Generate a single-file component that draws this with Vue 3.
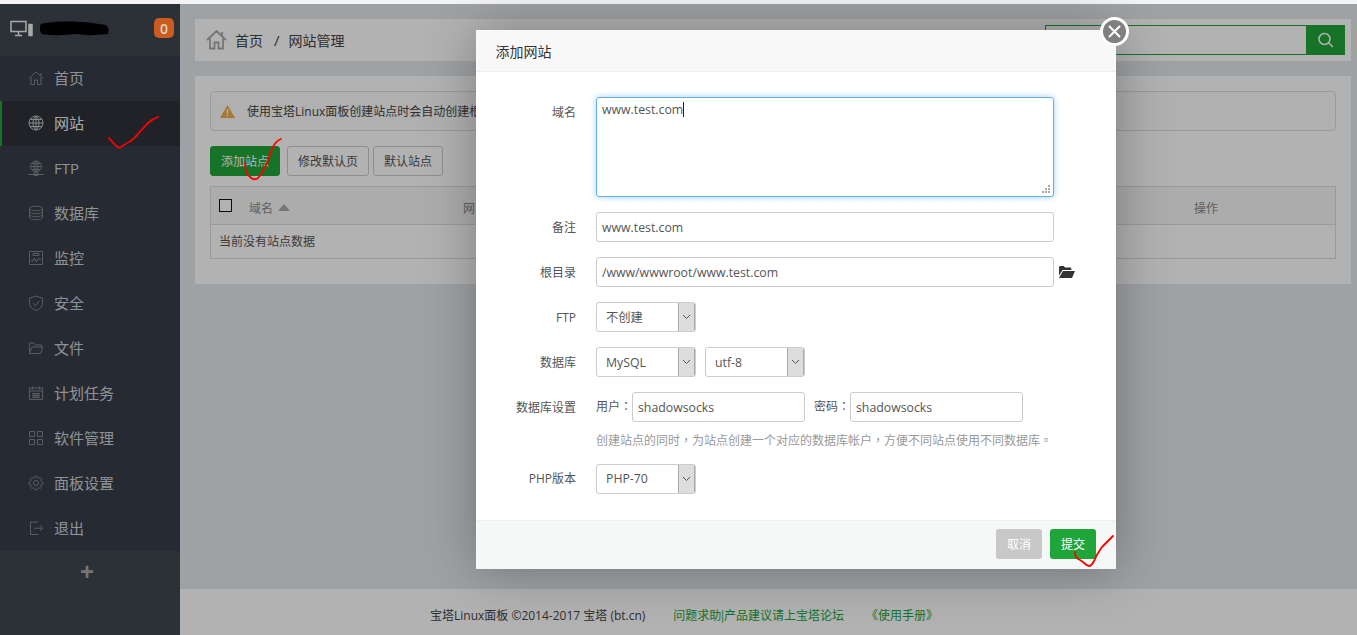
<script setup>
function gearPath() {
  let d = ''
  const n = 8
  for (let i = 0; i < n; i++) {
    const a = (i / n) * Math.PI * 2
    const w = Math.PI / n / 2
    const pts = [[5.4, a - w * 1.5], [7, a - w * 0.7], [7, a + w * 0.7], [5.4, a + w * 1.5]]
    for (const [r, t] of pts) {
      d += (d ? 'L' : 'M') + (8 + r * Math.cos(t)).toFixed(2) + ' ' + (8 + r * Math.sin(t)).toFixed(2)
    }
  }
  return d + 'Z M5.5 8a2.5 2.5 0 1 0 5 0a2.5 2.5 0 1 0-5 0Z'
}
const menu = [
  { name: '首页', d: 'M1 8.5L8 2l7 6.5M13 3v3M3 7.5v7h3.5V10h3v4.5H13v-7' },
  { name: '网站', active: true, d: 'M1 8a7 7 0 1 0 14 0a7 7 0 1 0-14 0ZM8 1v14M1 8h14M2 4.5h12M2 11.5h12M8 1c-4 3-4 11 0 14M8 1c4 3 4 11 0 14' },
  { name: 'FTP', d: 'M2.500 6.500a5.500 5.500 0 1 0 11 0a5.500 5.500 0 1 0-11 0ZM8 1v11M2.500 6.500h11M3.500 3.500h9M3.500 9.500h9M8 1c-3 3-3 8 0 11M8 1c3 3 3 8 0 11M0 14.500h16M6 13h4v2.500H6Z' },
  { name: '数据库', d: 'M1.500 3.500c0-3 13-3 13 0c0 3-13 3-13 0ZM1.500 3.500v9c0 3 13 3 13 0v-9M1.500 6.500c0 3 13 3 13 0M1.500 9.500c0 3 13 3 13 0' },
  { name: '监控', d: 'M1.500 1.500h13v13h-13ZM3 11h2l1.500-3 2 4 1.500-3h3M5 3.500h6v2H5Z' },
  { name: '安全', d: 'M8 1l6.500 2.200v5c0 3.800-3 5.800-6.500 7.300C4.500 14 1.500 12 1.500 8.200v-5ZM5 8l2.500 2.500L11.500 6' },
  { name: '文件', d: 'M1.500 13.500V3h4.500l1.500 2h6v2M1.500 13.500h11L15 7H4Z' },
  { name: '计划任务', d: 'M1.500 3h13v11.500h-13ZM4.500 1.500v3M11.500 1.500v3M1.500 6h13M4 8.500h8M4 10.500h8M4 12.500h8M6 8v5M8 8v5M10 8v5' },
  { name: '软件管理', d: 'M1.500 1.500h5v5h-5ZM9.500 1.500h5v5h-5ZM1.500 9.500h5v5h-5ZM9.500 9.500h5v5h-5Z' },
  { name: '面板设置', d: gearPath() },
  { name: '退出', d: 'M10 2H2.500v12.500H10M6 8.200h8.500M12 5.500l2.800 2.700-2.800 2.700' }
]
</script>

<template>
  <div class="page">
    <div class="strip"></div>
    <div class="shell">
      <aside class="side">
        <div class="side-head">
          <svg class="mon" width="23" height="17" viewBox="0 0 23 17" fill="none" stroke="currentColor" stroke-width="1.500">
            <path d="M1 1.500h15v10H1ZM5 15.500h7M8.500 12v3" />
            <path d="M19 4.500h3v11h-3Z" fill="currentColor" />
          </svg>
          <svg class="blob" width="70" height="15" viewBox="0 0 70 15">
            <path d="M1 3C10 1 24 0 40 1c8 0 12 1 26 3c3 2 3 7 2 9c-15 1-20 2-30 0c-12 1-24 2-36 0C-1 10-1 6 1 3Z" fill="#000" />
          </svg>
          <span class="badge">0</span>
        </div>
        <nav class="menu">
          <div v-for="m in menu" :key="m.name" class="item" :class="{ on: m.active }">
            <svg width="16" height="16" viewBox="0 0 16 16" fill="none" stroke="currentColor" stroke-width="1">
              <path :d="m.d" />
            </svg>
            <span>{{ m.name }}</span>
          </div>
        </nav>
        <div class="plus">+</div>
      </aside>
      <main class="main">
        <div class="crumbs">
          <svg class="home" width="21" height="21" viewBox="0 0 21 21" fill="none" stroke="#a8a8a8" stroke-width="1.800">
            <path d="M1 11L10.500 2L20 11M16 3v4M4 9.500V19.500h4.500v-6h4v6H17V9.500" />
          </svg>
          <span>首页</span>
          <span class="sep">/</span>
          <span>网站管理</span>
          <div class="search">
            <div class="search-btn">
              <svg width="18" height="18" viewBox="0 0 18 18" fill="none" stroke="#fff" stroke-width="1.500">
                <path d="M2 8a5.500 5.500 0 1 0 11 0a5.500 5.500 0 1 0-11 0ZM11.800 12l4 4" />
              </svg>
            </div>
          </div>
        </div>
        <section class="card">
          <div class="alert">
            <svg width="15" height="13" viewBox="0 0 15 13">
              <path d="M7.500 0L15 13H0Z" fill="#f0ad4e" />
              <path d="M6.800 4h1.400v5H6.800ZM6.800 10h1.400v1.500H6.800Z" fill="#fff" />
            </svg>
            <span>使用宝塔Linux面板创建站点时会自动创建根</span>
          </div>
          <div class="btns">
            <button class="btn green">添加站点</button>
            <button class="btn w82">修改默认页</button>
            <button class="btn plain">默认站点</button>
          </div>
          <div class="table">
            <div class="thead">
              <span class="check"></span>
              <span class="th-name">域名<i class="tri"></i></span>
              <span class="th-net">网</span>
              <span class="th-op">操作</span>
            </div>
            <div class="tbody">当前没有站点数据</div>
          </div>
        </section>
        <footer class="foot">
          <span>宝塔Linux面板 ©2014-2017 宝塔 (bt.cn)</span>
          <a class="l1">问题求助<span class="bar">|</span>产品建议请上宝塔论坛</a>
          <a class="l2">《使用手册》</a>
        </footer>
      </main>
    </div>

    <div class="mask"></div>

    <div class="modal">
      <div class="m-title">添加网站</div>
      <div class="m-body">
        <div class="row">
          <label>域名</label>
          <div class="area">www.test.com<i class="caret"></i>
            <svg class="grip" width="9" height="9" viewBox="0 0 9 9" fill="#a8a8a8">
              <path d="M6 0h2v2H6ZM3 3h2v2H3ZM6 3h2v2H6ZM0 6h2v2H0ZM3 6h2v2H3ZM6 6h2v2H6Z" />
            </svg>
          </div>
        </div>
        <div class="row">
          <label>备注</label>
          <div class="inp wide">www.test.com</div>
        </div>
        <div class="row">
          <label>根目录</label>
          <div class="inp wide">/www/wwwroot/www.test.com</div>
          <svg class="open" width="16" height="12" viewBox="0 0 16 12" fill="#333">
            <path d="M0 1.500C0 .7.600 0 1.400 0h3.400l1.200 1.500h5c.8 0 1.400.6 1.400 1.400V4H3.500L0 9.500ZM3.900 5H16l-3 7H0Z" />
          </svg>
        </div>
        <div class="row">
          <label>FTP</label>
          <div class="sel"><span>不创建</span><i class="arrow"><svg width="9" height="6" viewBox="0 0 9 6" fill="none" stroke="#555"><path d="M1 1l3.500 3.500L8 1" /></svg></i></div>
        </div>
        <div class="row">
          <label>数据库</label>
          <div class="sel"><span>MySQL</span><i class="arrow"><svg width="9" height="6" viewBox="0 0 9 6" fill="none" stroke="#555"><path d="M1 1l3.500 3.500L8 1" /></svg></i></div>
          <div class="sel second"><span>utf-8</span><i class="arrow"><svg width="9" height="6" viewBox="0 0 9 6" fill="none" stroke="#555"><path d="M1 1l3.500 3.500L8 1" /></svg></i></div>
        </div>
        <div class="row db">
          <label>数据库设置</label>
          <span class="pre">用户：</span>
          <div class="inp short">shadowsocks</div>
          <span class="pre pw">密码：</span>
          <div class="inp short">shadowsocks</div>
        </div>
        <div class="hint">创建站点的同时，为站点创建一个对应的数据库帐户，方便不同站点使用不同数据库。</div>
        <div class="row php">
          <label>PHP版本</label>
          <div class="sel"><span>PHP-70</span><i class="arrow"><svg width="9" height="6" viewBox="0 0 9 6" fill="none" stroke="#555"><path d="M1 1l3.500 3.500L8 1" /></svg></i></div>
        </div>
      </div>
      <div class="m-foot">
        <button class="mbtn gray">取消</button>
        <button class="mbtn ok">提交</button>
      </div>
      <div class="close">
        <svg width="13" height="13" viewBox="0 0 13 13" stroke="#fff" stroke-width="2"><path d="M1 1l11 11M12 1L1 12" /></svg>
      </div>
    </div>

    <svg class="ink" width="1357" height="635" viewBox="0 0 1357 635" fill="none" stroke="#f00" stroke-width="1.800" stroke-linecap="round" stroke-linejoin="round">
      <path d="M109 138C112 142 116 146 119 148C123 146 126 143 131 141C137 136 143 128 148 123C151 120 155 118 158 117" />
      <path d="M245 163C245 170 247 175 250 177C253 180 257 180 259 177C263 171 266 166 268 160C270 154 271 151 273 147C275 143 278 140 281 139" />
      <path d="M1075 552C1075 556 1077 559 1080 560C1084 562 1086 566 1089 566C1092 566 1093 563 1095 559C1097 554 1100 550 1102 547C1106 543 1110 539 1113 536" />
    </svg>
  </div>
</template>

<style>
html, body { margin: 0; padding: 0; overflow: hidden; }
</style>

<style scoped>
.page {
  position: relative;
  width: 1357px;
  height: 635px;
  overflow: hidden;
  display: flex;
  flex-direction: column;
  font-family: "Open Sans", "Noto Sans CJK SC", sans-serif;
  font-size: 12px;
  color: #555;
  background: #fff;
}
.strip { height: 4px; background: #f4f4f4; flex: none; }
.shell { flex: 1; display: flex; min-height: 0; }

.side { width: 180px; flex: none; background: #3f4650; display: flex; flex-direction: column; }
.side-head { height: 52px; display: flex; align-items: center; padding: 0 6px 4px 10px; box-sizing: border-box; color: #fff; }
.mon { margin-right: 7px; color: #f2f2f2; }
.blob { flex: none; }
.badge {
  margin-left: auto; width: 20px; height: 20px; border-radius: 5px; background: #c95c1e; position: relative; z-index: 1;
  color: #e3d3c3; font-size: 14px; font-weight: 600; display: flex; align-items: center; justify-content: center;
}
.menu { background: #373d48; }
.item {
  height: 45px; display: flex; align-items: center; box-sizing: border-box;
  padding: 0 0 2px 26px; border-left: 2px solid #3c4040; color: #cdd2d6; font-size: 15px;
}
.item svg { margin-right: 10px; color: #80868c; flex: none; }
.item.on { background: #2f3238; border-left-color: #20a53a; color: #f0f0f0; }
.item.on svg { color: #c2c4c6; }
.plus { text-align: center; padding-right: 6px; color: #a3a9ae; font-size: 24px; line-height: 41px; font-family: "Liberation Sans", sans-serif; font-weight: 700; }

.main { flex: 1; background: #e4e9ec; padding: 15px 6px 0 15px; display: flex; flex-direction: column; min-width: 0; }
.crumbs {
  height: 42px; background: #fff; display: flex; align-items: center; padding: 0 6px 0 11px;
  font-size: 14px; color: #444; flex: none;
}
.home { margin-right: 8px; margin-top: -1px; }
.sep { margin: 0 9px 0 11px; font-size: 15px; }
.search {
  margin-left: auto; width: 300px; height: 30px; box-sizing: border-box; border: 1px solid #20a53a;
  display: flex; justify-content: flex-end; background: #fff;
}
.search-btn { width: 39px; margin: -1px; background: #20a53a; display: flex; align-items: center; justify-content: center; }

.card { margin-top: 15px; height: 208px; box-sizing: border-box; background: #fff; padding: 15px 15px 0; flex: none; }
.alert {
  height: 40px; box-sizing: border-box; border: 1px solid #ddd; border-radius: 4px; background: #fdfdfd;
  display: flex; align-items: center; padding-left: 9px; color: #444; white-space: nowrap;
}
.alert svg { margin-right: 12px; }
.btns { display: flex; margin-top: 15px; gap: 7px; }
.btn {
  height: 30px; box-sizing: border-box; border: 1px solid #ccc; border-radius: 3px; background: #fff; color: #555;
  font: inherit; padding: 0; width: 70px;
}
.btn.w82 { width: 82px; }
.btn.plain { margin-left: -3px; }
.btn.green { background: #20a53a; border-color: #20a53a; color: #fff; }
.table { margin-top: 10px; border: 1px solid #ddd; height: 73px; box-sizing: border-box; }
.thead { height: 38px; box-sizing: border-box; background: #f6f6f6; border-bottom: 1px solid #ddd; position: relative; display: flex; align-items: center; color: #888; }
.check { width: 11px; height: 11px; border: 1px solid #111; background: #fff; margin-left: 8px; margin-top: -1px; }
.th-name { margin-left: 17px; display: flex; align-items: center; margin-top: 4px; }
.tri { width: 0; height: 0; border: 6px solid transparent; border-top: 0; border-bottom: 7px solid #aaa; margin-left: 5px; }
.th-net { margin-left: 173px; margin-top: 4px; white-space: nowrap; }
.th-op { margin-left: auto; margin-right: 117px; margin-top: 4px; }
.tbody { height: 31px; display: flex; align-items: center; padding-left: 8px; color: #555; }

.foot { margin-top: auto; height: 46px; background: #fff; margin-left: -15px; margin-right: -6px; display: flex; align-items: center; padding: 6px 0 0 250px; box-sizing: border-box; color: #444; white-space: nowrap; }
.foot a { color: #20a53a; }
.bar { margin: 0 -2px; }
.l1 { margin-left: 28px; }
.l2 { margin-left: 22px; }

.mask { position: absolute; left: 0; right: 0; top: 4px; bottom: 0; background: rgba(0, 0, 0, .3); }

.modal {
  position: absolute; left: 476px; top: 30px; width: 640px; height: 539px; background: #fff;
  box-shadow: 1px 1px 50px rgba(0, 0, 0, .3); display: flex; flex-direction: column;
}
.m-title { height: 42px; box-sizing: border-box; background: #f8f8f8; border-bottom: 1px solid #eee; padding-left: 19.5px; line-height: 43px; font-size: 14px; color: #333; flex: none; }
.m-body { flex: 1; padding-top: 25px; }
.row { display: flex; align-items: flex-start; margin-bottom: 15px; }
.row label { width: 100px; height: 30px; box-sizing: border-box; text-align: right; margin-right: 20px; line-height: 30px; padding-top: 1px; color: #555; flex: none; }
.php label { padding-top: 0; }
.area {
  position: relative; width: 458px; height: 100px; box-sizing: border-box; border: 1px solid #66afe9; border-radius: 3px;
  padding: 3px 5px; font-size: 12.3px; line-height: 17px; color: #555;
  box-shadow: 0 0 6px rgba(102, 175, 233, .6);
}
.caret { display: inline-block; width: 1px; height: 15px; background: #222; vertical-align: -3px; }
.grip { position: absolute; right: 2px; bottom: 2px; }
.inp {
  height: 30px; box-sizing: border-box; border: 1px solid #ccc; border-radius: 3px; padding: 0 5px; line-height: 29px;
  font-size: 12.3px; color: #555; flex: none;
}
.wide { width: 458px; }
.short { width: 173px; }
.open { margin: 9px 0 0 5px; }
.sel {
  width: 100px; height: 30px; box-sizing: border-box; border: 1px solid #ccc; border-radius: 3px; display: flex; align-items: stretch;
  font-size: 12.3px; color: #555; line-height: 30px; flex: none; overflow: hidden;
}
.sel span { flex: 1; padding-left: 9px; }
.php .sel { line-height: 28px; }
.arrow { width: 17px; background: #ddd; border-left: 1px solid #aaa; border-right: 1px solid #aaa; box-sizing: border-box; display: flex; align-items: center; justify-content: center; }
.second { margin-left: 9px; }
.pre { line-height: 30px; width: 36px; flex: none; color: #555; font-family: "Open Sans", "Noto Sans CJK TC", sans-serif; }
.pw { margin-left: 9px; width: 36px; }
.db { margin-bottom: 10px; }
.hint { margin: 0 0 15px 120px; height: 17px; line-height: 17px; color: #999; white-space: nowrap; font-family: "Open Sans", "Noto Sans CJK TC", sans-serif; }
.m-foot { height: 49px; box-sizing: border-box; background: #f6f8f8; border-top: 1px solid #eee; display: flex; align-items: center; justify-content: flex-end; gap: 8px; padding: 0 20px 2px 0; flex: none; }
.mbtn { width: 46px; height: 30px; border: 0; border-radius: 3px; color: #fff; font: inherit; padding: 0; }
.gray { background: #c8c8c8; }
.ok { background: #20a53a; }
.close {
  position: absolute; right: -13px; top: -13px; width: 29px; height: 29px; box-sizing: border-box; border: 3px solid #fff; border-radius: 50%;
  background: #808080; display: flex; align-items: center; justify-content: center;
}
.ink { position: absolute; left: 0; top: 0; pointer-events: none; }
</style>
